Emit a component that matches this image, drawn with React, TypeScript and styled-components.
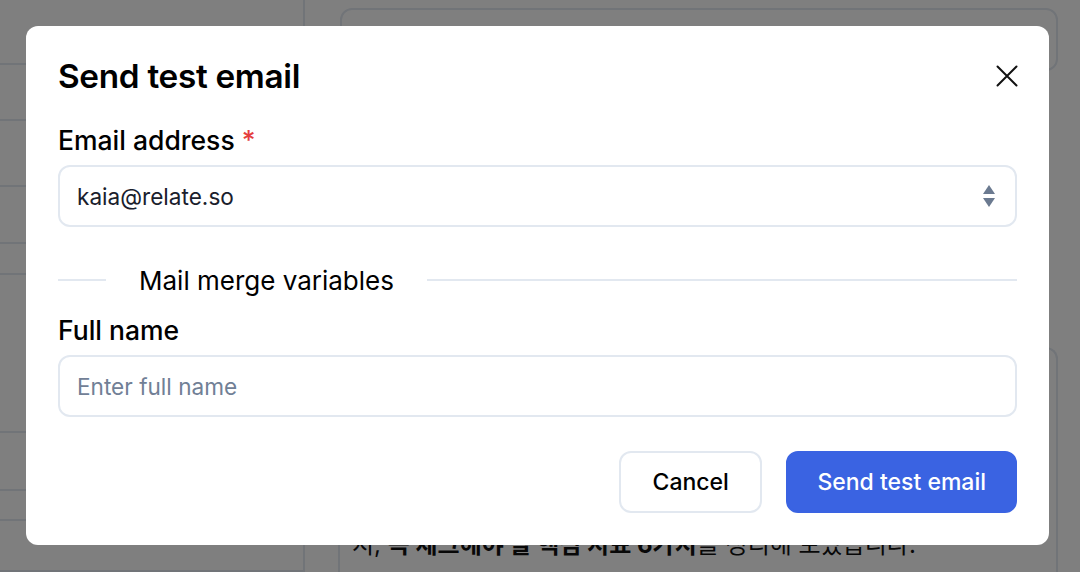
import React from "react";
import styled, { createGlobalStyle } from "styled-components";

const GlobalStyle = createGlobalStyle`
  html, body {
    margin: 0;
    padding: 0;
    width: 1080px;
    height: 572px;
    overflow: hidden;
    background: #ffffff;
    font-family: Inter, "Noto Sans CJK KR", sans-serif;
  }
  * { box-sizing: border-box; }
`;

const sidebarRows = [65, 56, 66, 57, 31, 158, 58, 30, 51];

export default function App() {
  return (
    <>
      <GlobalStyle />
      <Page>
        <Sidebar>
          {sidebarRows.map((h, i) => (
            <SideRow key={i} $height={h} />
          ))}
        </Sidebar>
        <Main>
          <TopCard />
          <Spacer />
          <BodyCard>
            <BodyText>
              지, <b>꼭 체크해야 할 핵심 지표 6가지</b>를 정리해 보았습니다.
            </BodyText>
          </BodyCard>
        </Main>
      </Page>

      <Overlay>
        <Modal>
          <Header>
            <Title>Send test email</Title>
            <CloseButton aria-label="Close">
              <svg width="22" height="22" viewBox="0 0 22 22" fill="none">
                <path d="M1.5 1.5L20.5 20.5M20.5 1.5L1.5 20.5" stroke="#111" strokeWidth="2" strokeLinecap="round" />
              </svg>
            </CloseButton>
          </Header>

          <Label>
            Email address <Required>*</Required>
          </Label>
          <Field>
            <FieldText>kaia@relate.so</FieldText>
            <svg width="14" height="24" viewBox="0 0 14 24">
              <path d="M7 1L13 10H1Z" fill="#6b7a90" />
              <path d="M7 23L13 14H1Z" fill="#6b7a90" />
            </svg>
          </Field>

          <Divider>
            <Line $grow={false} />
            <DividerText>Mail merge variables</DividerText>
            <Line $grow />
          </Divider>

          <Label>Full name</Label>
          <Field>
            <FieldText $placeholder>Enter full name</FieldText>
          </Field>

          <Footer>
            <Button>Cancel</Button>
            <Button $primary>Send test email</Button>
          </Footer>
        </Modal>
      </Overlay>
    </>
  );
}

//Styles
const Page = styled.div`
  display: flex;
  width: 1080px;
  height: 572px;
`;
const Sidebar = styled.div`
  width: 305px;
  flex-shrink: 0;
  border-right: 2px solid #e2e8f0;
  display: flex;
  flex-direction: column;
`;
const SideRow = styled.div<{ $height: number }>`
  height: ${(p) => p.$height}px;
  flex-shrink: 0;
  border-bottom: 2px solid #e2e8f0;
`;
const Main = styled.div`
  flex: 1;
  display: flex;
  flex-direction: column;
  padding: 8px 22px 0 33px;
`;
const TopCard = styled.div`
  height: 63px;
  border: 2px solid #e2e8f0;
  border-radius: 12px;
  margin-left: 2px;
`;
const Spacer = styled.div`
  height: 276px;
`;
const BodyCard = styled.div`
  flex: 1;
  border: 2px solid #e2e8f0;
  border-bottom: none;
  border-radius: 12px 12px 0 0;
  padding: 178px 16px 0 12px;
`;
const BodyText = styled.p`
  margin: 0;
  font-size: 24px;
  line-height: 36px;
  color: #111;
  b {
    font-weight: 700;
  }
`;
const Overlay = styled.div`
  position: fixed;
  inset: 0;
  background: rgba(0, 0, 0, 0.5);
  display: flex;
  align-items: flex-start;
  justify-content: flex-start;
  padding: 26px 0 0 26px;
`;
const Modal = styled.div`
  width: 1023px;
  background: #ffffff;
  border-radius: 12px;
  padding: 32px 32px 32px 32px;
  display: flex;
  flex-direction: column;
`;
const Header = styled.div`
  display: flex;
  align-items: center;
  justify-content: space-between;
  height: 36px;
  margin-bottom: 28px;
`;
const Title = styled.h2`
  margin: 0;
  font-size: 33.3px;
  font-weight: 600;
  letter-spacing: -0.3px;
  color: #000;
  line-height: 36px;
`;
const CloseButton = styled.button`
  border: none;
  background: none;
  padding: 0;
  margin-right: -1px;
  display: flex;
  cursor: pointer;
`;
const Label = styled.div`
  font-size: 26.5px;
  font-weight: 500;
  line-height: 36px;
  color: #000;
  margin-bottom: 7px;
`;
const Required = styled.span`
  color: #e53e3e;
`;
const Field = styled.div`
  height: 62px;
  border: 2px solid #e2e8f0;
  border-radius: 12px;
  display: flex;
  align-items: center;
  justify-content: space-between;
  padding: 0 19px 0 17px;
`;
const FieldText = styled.span<{ $placeholder?: boolean }>`
  font-size: 22.6px;
  color: ${(p) => (p.$placeholder ? "#718096" : "#1a202c")};
`;
const Divider = styled.div`
  display: flex;
  align-items: center;
  gap: 33px;
  margin: 35px 0 14px;
  height: 36px;
`;
const Line = styled.div<{ $grow: boolean }>`
  height: 2px;
  background: #e2e8f0;
  ${(p) => (p.$grow ? "flex: 1;" : "width: 48px;")}
`;
const DividerText = styled.span`
  font-size: 26px;
  font-weight: 400;
  color: #000;
`;
const Footer = styled.div`
  display: flex;
  justify-content: flex-end;
  gap: 24px;
  margin-top: 34px;
`;
const Button = styled.button<{ $primary?: boolean }>`
  height: 62px;
  padding: 0 ${(p) => (p.$primary ? "29px" : "31.5px")};
  border-radius: 12px;
  font-family: Inter, sans-serif;
  font-size: 23px;
  font-weight: 500;
  cursor: pointer;
  border: 2px solid ${(p) => (p.$primary ? "#3a63e2" : "#e2e8f0")};
  background: ${(p) => (p.$primary ? "#3a63e2" : "#ffffff")};
  color: ${(p) => (p.$primary ? "#ffffff" : "#000000")};
`;
